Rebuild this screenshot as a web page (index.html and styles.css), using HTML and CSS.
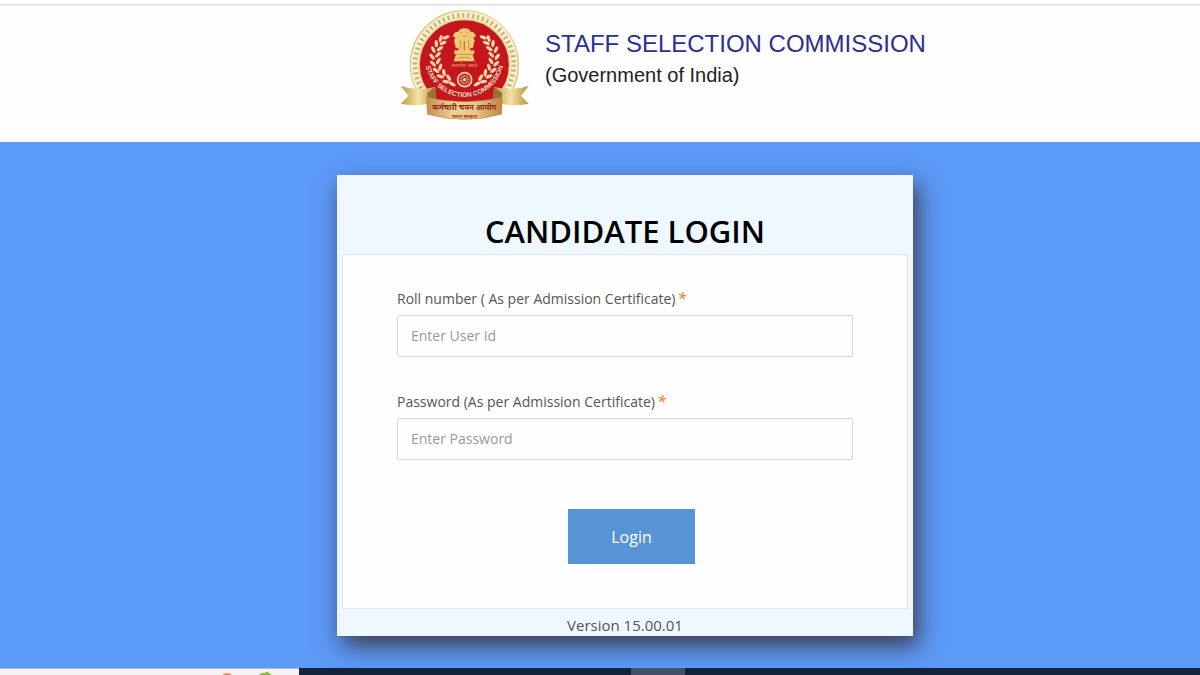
FILE: index.html
```html
<!DOCTYPE html>
<html lang="en">
<head>
<meta charset="utf-8">
<meta name="viewport" content="width=device-width, initial-scale=1.0">
<title>Staff Selection Commission - Candidate Login</title>
<link rel="stylesheet" href="styles.css">
</head>
<body>
<header class="site-header">
  <svg class="emblem" viewBox="15 30 390 336" role="img" aria-label="Staff Selection Commission emblem">
    <defs>
      <linearGradient id="gold" x1="0" y1="0" x2="1" y2="1">
        <stop offset="0" stop-color="#d9b65c"/>
        <stop offset=".5" stop-color="#efdca0"/>
        <stop offset="1" stop-color="#cfa84e"/>
      </linearGradient>
      <linearGradient id="tail" x1="0" y1="0" x2="1" y2="0">
        <stop offset="0" stop-color="#c29a45"/>
        <stop offset=".5" stop-color="#f3e3a4"/>
        <stop offset="1" stop-color="#b98f3c"/>
      </linearGradient>
      <linearGradient id="band" x1="0" y1="0" x2="1" y2="0">
        <stop offset="0" stop-color="#c58e4e"/>
        <stop offset=".35" stop-color="#efd096"/>
        <stop offset=".65" stop-color="#eac58a"/>
        <stop offset="1" stop-color="#bd8446"/>
      </linearGradient>
      <path id="motto" d="M89 160 V172 A119 119 0 0 0 327 172 V160"/>
      <g id="leaves" fill="#f0d6a8">
        <ellipse cx="153" cy="112" rx="11" ry="5" transform="rotate(-20 153 112)"/>
        <ellipse cx="137" cy="116" rx="11" ry="5" transform="rotate(-75 137 116)"/>
        <ellipse cx="144" cy="129" rx="11" ry="5" transform="rotate(-25 144 129)"/>
        <ellipse cx="124" cy="131" rx="11" ry="5" transform="rotate(-95 124 131)"/>
        <ellipse cx="135" cy="146" rx="11" ry="5" transform="rotate(-35 135 146)"/>
        <ellipse cx="115" cy="149" rx="11" ry="5" transform="rotate(65 115 149)"/>
        <ellipse cx="129" cy="164" rx="11" ry="5" transform="rotate(-45 129 164)"/>
        <ellipse cx="111" cy="170" rx="11" ry="5" transform="rotate(55 111 170)"/>
        <ellipse cx="130" cy="183" rx="11" ry="5" transform="rotate(-60 130 183)"/>
        <ellipse cx="114" cy="191" rx="11" ry="5" transform="rotate(45 114 191)"/>
        <ellipse cx="136" cy="201" rx="11" ry="5" transform="rotate(-75 136 201)"/>
        <ellipse cx="123" cy="211" rx="11" ry="5" transform="rotate(35 123 211)"/>
        <ellipse cx="147" cy="218" rx="11" ry="5" transform="rotate(-100 147 218)"/>
        <ellipse cx="136" cy="229" rx="11" ry="5" transform="rotate(20 136 229)"/>
        <ellipse cx="161" cy="233" rx="11" ry="5" transform="rotate(60 161 233)"/>
        <ellipse cx="153" cy="245" rx="11" ry="5" transform="rotate(12 153 245)"/>
        <ellipse cx="172" cy="252" rx="11" ry="5" transform="rotate(30 172 252)"/>
      </g>
    </defs>

    <!-- rim -->
    <circle cx="208" cy="194" r="162" fill="#f6efd3" stroke="url(#gold)" stroke-width="4"/>
    <circle cx="208" cy="194" r="148" fill="none" stroke="#c6b06a" stroke-width="14" stroke-dasharray="6 9"/>
    <circle cx="208" cy="194" r="136" fill="#c4161c" stroke="#ead798" stroke-width="5"/>

    <!-- lion capital -->
    <g fill="#efc879">
      <path d="M191 92 Q197 84 208 85 Q220 84 226 92 L230 107 L225 126 L190 126 L186 107 Z"/>
      <path d="M190 95 Q178 94 173 108 L181 113 L177 121 L182 143 L197 147 L197 101 Z"/>
      <path d="M227 95 Q238 94 243 108 L235 113 L239 121 L234 143 L219 147 L219 101 Z"/>
      <path d="M188 123 H228 L225 153 H191 Z"/>
      <path d="M178 151 H238 V162 H178 Z"/>
      <path d="M183 162 H233 L239 184 H176 Z"/>
    </g>
    <g fill="none" stroke="#b9772f" stroke-width="2">
      <path d="M197 98 L204 96 M213 96 L220 98 M203 107 Q209 112 215 107 M196 120 V147 M221 120 V147"/>
      <path d="M180 163 H237 M187 175 Q208 169 229 175"/>
      <path d="M208 124 V151" stroke-width="4"/>
    </g>
    <text class="emblem-truth" x="208" y="202">सत्यमेव जयते</text>

    <!-- wreath -->
    <use href="#leaves"/>
    <use href="#leaves" transform="translate(418 0) scale(-1 1)"/>

    <!-- wheel -->
    <circle cx="209" cy="239" r="21" fill="#b72620" stroke="#efd5a7" stroke-width="5"/>
    <circle cx="209" cy="239" r="11" fill="none" stroke="#efd5a7" stroke-width="7" stroke-dasharray="2 3"/>
    <circle cx="209" cy="239" r="5" fill="#efd5a7"/>

    <text class="emblem-motto"><textPath href="#motto" startOffset="50%">STAFF SELECTION COMMISSION</textPath></text>

    <!-- ribbon -->
    <path d="M17 258 Q70 275 121 260 L124 307 Q70 322 18 311 L40 287 Z" fill="url(#tail)"/>
    <path d="M401 258 Q350 275 297 260 L294 307 Q350 322 401 311 L378 287 Z" fill="url(#tail)"/>
    <path d="M97 279 L121 260 L124 309 L97 313 Z" fill="#9c7132"/>
    <path d="M321 279 L297 260 L294 309 L321 313 Z" fill="#9c7132"/>
    <path d="M95 292 Q208 318 321 292 L320 342 Q208 374 97 342 Z" fill="url(#band)" stroke="#b98544" stroke-width="2"/>
    <text class="emblem-name" x="208" y="331">कर्मचारी चयन आयोग</text>
    <text class="emblem-gov" x="208" y="353">भारत सरकार</text>
  </svg>
  <div class="site-name">
    <h1>STAFF SELECTION COMMISSION</h1>
    <p>(Government of India)</p>
  </div>
</header>

<main class="page">
  <section class="login-card">
    <h2>CANDIDATE LOGIN</h2>
    <form class="login-form">
      <div class="field">
        <label for="roll">Roll number ( As per Admission Certificate)<span class="required">*</span></label>
        <input type="text" id="roll" name="roll" placeholder="Enter User Id">
      </div>
      <div class="field">
        <label for="password">Password (As per Admission Certificate)<span class="required">*</span></label>
        <input type="password" id="password" name="password" placeholder="Enter Password">
      </div>
      <button type="submit">Login</button>
    </form>
    <p class="version">Version 15.00.01</p>
  </section>
</main>

<footer class="taskbar">
  <div class="taskbar-search">
    <svg width="52" height="4" viewBox="0 0 52 4" aria-hidden="true">
      <path d="M1 4 Q6 0 11 4 Z" fill="#ee806c"/>
      <path d="M38 4 Q40 1 44 2 Q46 -1 48 2 L51 4 Z" fill="#91b93d"/>
    </svg>
  </div>
  <div class="taskbar-active"></div>
</footer>
</body>
</html>
```
FILE: styles.css
```css
* {
  box-sizing: border-box;
}
body {
  display: flex;
  flex-direction: column;
  min-height: 100vh;
  margin: 0;
  font-family: "Open Sans", sans-serif;
  color: #555;
  background: #fefefe;
}
h1, h2, p {
  margin: 0;
  font-weight: normal;
}

/* header */
.site-header {
  display: flex;
  flex: none;
  gap: 15px;
  height: 142px;
  padding: 5px 0 0 calc(33% + 4px);
  background: linear-gradient(#fefefe 4px, #dcdcdc 4px, #dcdcdc 5px, #fefefe 6px);
}
.emblem {
  flex: none;
  width: 130px;
  height: 112px;
  margin-top: 5px;
}
.emblem text {
  font-family: "Noto Sans", sans-serif;
  text-anchor: middle;
}
.emblem .emblem-motto {
  font: bold 20px "Liberation Sans", sans-serif;
  fill: #f6dcc0;
}
.emblem-truth {
  font-size: 16px;
  fill: #e6a27a;
}
.emblem-name {
  font-size: 23px;
  font-weight: bold;
  fill: #82351c;
}
.emblem-gov {
  font-size: 15px;
  font-weight: bold;
  fill: #a33a20;
}
.site-name {
  padding-top: 23px;
  font-family: "Liberation Sans", Arial, sans-serif;
}
.site-name h1 {
  font-size: 24px;
  line-height: 32px;
  color: #2b2f93;
}
.site-name p {
  font-size: 20px;
  line-height: 30px;
  color: #222;
}

/* login */
.page {
  flex: 1;
  padding: 33px 0 32px;
  background: #5c9af8;
}
.login-card {
  width: 48%;
  margin-left: calc(28% + 1px);
  padding: 0 5px;
  background: #eff8ff;
  box-shadow: 5px 10px 22px rgba(60, 55, 70, .95);
}
.login-card h2 {
  padding-top: 34px;
  font-size: 31px;
  font-weight: 600;
  line-height: 45px;
  text-align: center;
  color: #000;
}
.login-form {
  padding: 34px 54px 44px;
  background: #fefefe;
  border: 1px solid #dfe8ee;
}
.field {
  margin-bottom: 35px;
}
label {
  display: block;
  padding-bottom: 6px;
  font-size: 14px;
  line-height: 20px;
}
.required {
  padding-left: 2px;
  font-size: 16px;
  font-style: italic;
  font-weight: 600;
  line-height: 1;
  color: #ee8c3a;
}
input {
  display: block;
  width: 100%;
  height: 42px;
  padding: 0 13px 2px;
  font: 14px "Open Sans", sans-serif;
  color: #555;
  background: #fefefe;
  border: 1px solid #d8d8d8;
  border-radius: 2px;
}
input::placeholder {
  color: #999;
}
button {
  display: block;
  width: 127px;
  height: 55px;
  margin: 49px 0 0 171px;
  padding: 0;
  font: 16px "Open Sans", sans-serif;
  color: #fff;
  background: #5794d5;
  border: 0;
}
.version {
  padding-top: 5px;
  font-size: 15px;
  line-height: 22px;
  text-align: center;
}

/* taskbar */
.taskbar {
  display: flex;
  flex: none;
  height: 7px;
  background: #15233f;
}
.taskbar-search {
  width: 299px;
  padding: 2px 0 0 221px;
  background: #f3f3f3;
  border-top: 1px solid #b5bac5;
}
.taskbar-search svg {
  display: block;
}
.taskbar-active {
  width: 54px;
  margin-left: 332px;
  background: #454f68;
}
```
